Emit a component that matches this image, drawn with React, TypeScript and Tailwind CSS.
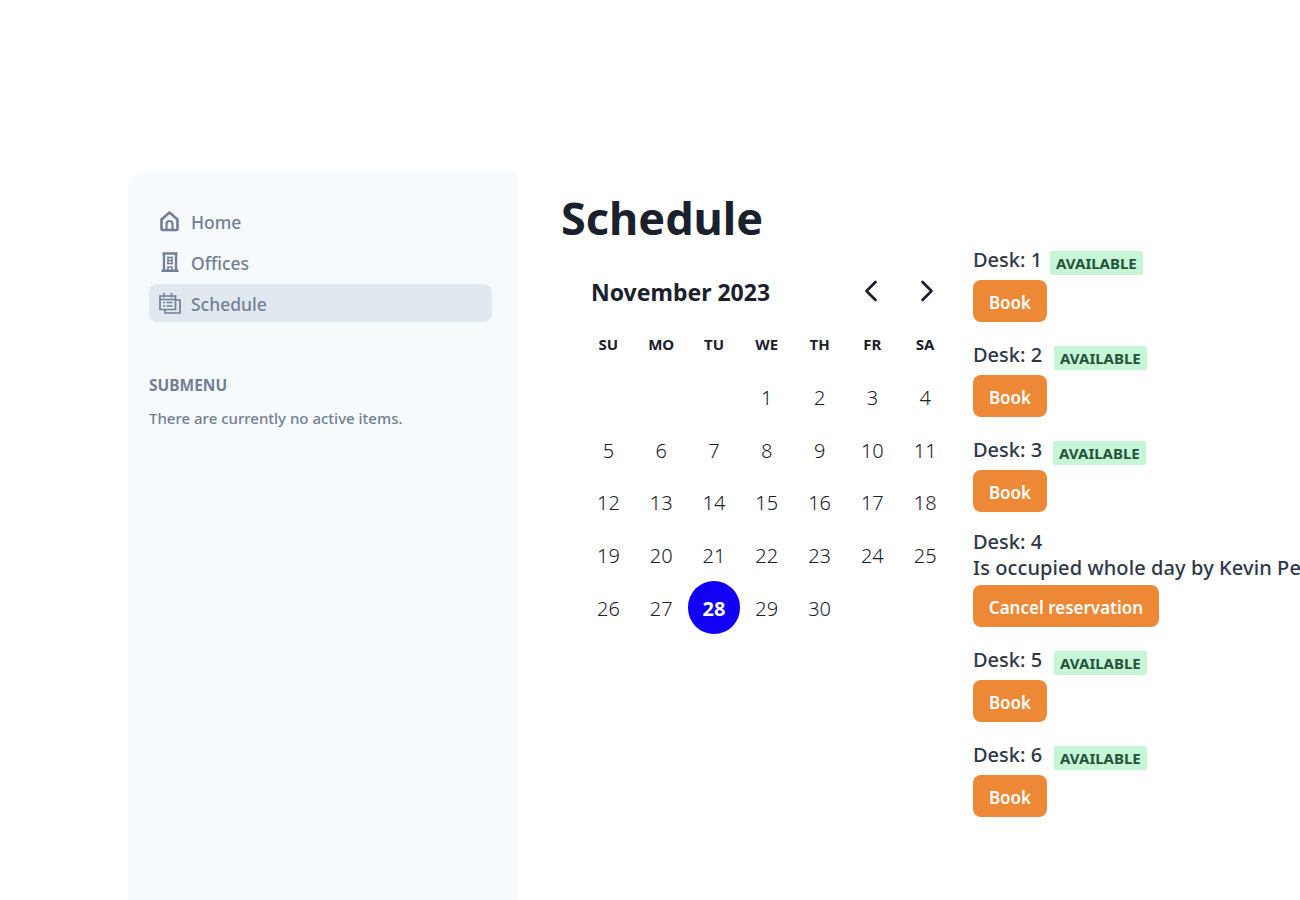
import { ChevronLeft, ChevronRight } from 'lucide-react'

const font = "font-['Noto_Sans','Open_Sans',sans-serif]"

function HomeIcon() {
  return (
    <svg width="22" height="22" viewBox="0 0 22 22" fill="none" stroke="currentColor" strokeWidth="2.600" strokeLinejoin="round">
      <path d="M2.500 9.500 10.500 2.500l8 7V19a1 1 0 0 1-1 1h-14a1 1 0 0 1-1-1z" />
      <path d="M7.500 20v-6a3 3 0 0 1 6 0v6" strokeWidth="2.200" />
    </svg>
  )
}

function OfficeIcon() {
  return (
    <svg width="22" height="22" viewBox="0 0 22 22" fill="none" stroke="currentColor" strokeWidth="2.400">
      <path d="M3.500 2.500h15M5 2v18M17 2v18M2.500 19.800h17" />
      <path d="M8 6.500h6M8 9.500h6M8 12.500h6M9 5.500v8M13 5.500v8" strokeWidth="1.400" />
      <path d="M9 19v-3h4v3" strokeWidth="1.600" />
    </svg>
  )
}

function ScheduleIcon() {
  return (
    <svg width="22" height="22" viewBox="0 0 22 22" fill="none" stroke="currentColor" strokeWidth="1.700">
      <path d="M1 17.500V4h15.500v13.500z" />
      <path d="M1 7.500h15.500M5 1v4.500M12.500 1v4.500" />
      <path d="M4 10.500h2M7.500 10.500h6M4 14h2M7.500 14h6" />
      <path d="M16.500 8h4.500v13H6v-3.500" />
    </svg>
  )
}

function NavItem({ icon, label, active }: { icon: React.ReactNode; label: string; active?: boolean }) {
  return (
    <div className={`flex h-[38px] items-center gap-[10px] rounded-lg pl-[10px] text-[17.500px] font-medium text-[#718096] ${active ? 'bg-[#e2e8f0]' : ''}`}>
      {icon}
      <span className="pt-[2px]">{label}</span>
    </div>
  )
}

function Desk({ n, gap }: { n: number; gap: string }) {
  return (
    <div className="mb-[23px]">
      <div className="flex h-[25px] items-start">
        <span className="text-[20px] leading-[20px] font-medium text-[#2d3748]">Desk: {n}</span>
        <span className={`mt-[1px] rounded-[2px] bg-[#c6f6d5] px-[6px] text-[15px] leading-[24px] font-bold text-[#22543d] ${gap}`}>AVAILABLE</span>
      </div>
      <button className="mt-[5px] block h-[42px] w-[74px] rounded-lg bg-[#ed8936] pt-[3px] text-[17px] font-semibold text-white">Book</button>
    </div>
  )
}

const days = ['SU', 'MO', 'TU', 'WE', 'TH', 'FR', 'SA']

export default function App() {
  const cells: (number | null)[] = [null, null, null]
  for (let d = 1; d <= 30; d++) cells.push(d)

  return (
    <div className={`flex h-[900px] w-[1300px] overflow-hidden bg-white pt-[172px] pl-[128px] ${font}`}>
      <aside className="w-[390px] shrink-0 rounded-tl-2xl bg-[#f7fafc] px-[21px] pt-[30px]">
        <nav className="flex w-[343px] flex-col gap-[3px]">
          <NavItem icon={<HomeIcon />} label="Home" />
          <NavItem icon={<OfficeIcon />} label="Offices" />
          <NavItem icon={<ScheduleIcon />} label="Schedule" active />
        </nav>
        <h2 className="mt-[52px] text-[15.500px] font-bold text-[#718096]">SUBMENU</h2>
        <p className="mt-[10px] text-[15px] font-medium text-[#718096]">There are currently no active items.</p>
      </aside>
      <main className="shrink-0 pl-[43px]">
        <h1 className="h-[78px] text-[45px] leading-[92px] font-bold text-[#1a202c]">Schedule</h1>
        <div className="flex">
          <div className="w-[391px] pt-[21px] pl-[21px]">
            <div className="flex h-[40px] items-center justify-between pr-[7px] pl-[9px] text-[#1a202c]">
              <span className="pt-[2px] text-[23px] font-bold">November 2023</span>
              <div className="flex gap-[20px]">
                <ChevronLeft size={36} strokeWidth={1.800} />
                <ChevronRight size={36} strokeWidth={1.800} />
              </div>
            </div>
            <div className="mt-[11px] grid grid-cols-[repeat(7,52.800px)]">
              {days.map((d) => (
                <div key={d} className="flex h-[44px] items-center justify-center text-[15px] font-bold text-[#1a202c]">{d}</div>
              ))}
            </div>
            <div className="mt-[4px] grid grid-cols-[repeat(7,52.800px)]">
              {cells.map((d, i) => (
                <div key={i} className={`flex h-[52.800px] items-center justify-center pt-[3px] text-[20px] ${d === 28 ? 'rounded-full bg-[#1100f5] font-bold text-white' : 'font-[350] text-[#1a202c]'}`}>{d}</div>
              ))}
            </div>
          </div>
          <div className="shrink-0 pl-[21px] whitespace-nowrap">
            <Desk n={1} gap="ml-[8px]" />
            <Desk n={2} gap="ml-[12px]" />
            <Desk n={3} gap="ml-[11px]" />
            <div className="mb-[23px] -mt-[6px]">
              <div className="text-[20px] leading-[26px] font-medium text-[#2d3748]">Desk: 4</div>
              <div className="text-[20px] leading-[26px] font-medium tracking-[0.1px] text-[#2d3748]">Is occupied whole day by Kevin Pe</div>
              <button className="mt-[4px] block h-[42px] w-[186px] rounded-lg bg-[#ed8936] pt-[3px] text-[17px] font-semibold text-white">Cancel reservation</button>
            </div>
            <Desk n={5} gap="ml-[12px]" />
            <Desk n={6} gap="ml-[12px]" />
          </div>
        </div>
      </main>
    </div>
  )
}
